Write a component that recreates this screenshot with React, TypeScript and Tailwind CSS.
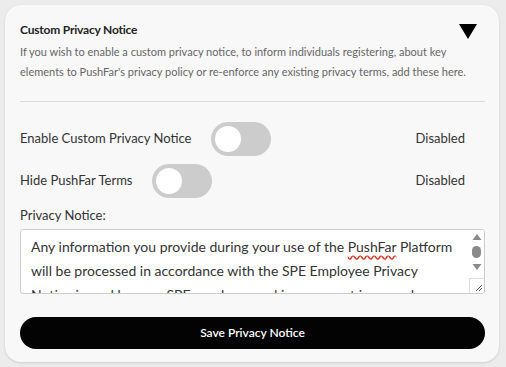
import { useState } from 'react';

function Toggle({ on, onChange }: { on: boolean; onChange: () => void }) {
  return (
    <button
      type="button"
      onClick={onChange}
      className={`w-[60px] h-[34px] rounded-full p-[4px] flex items-center shrink-0 ${on ? 'bg-black justify-end' : 'bg-[#cccccc] justify-start'}`}
    >
      <span className="w-[26px] h-[26px] rounded-full bg-white block" />
    </button>
  );
}

export default function App() {
  const [enabled, setEnabled] = useState(false);
  const [hideTerms, setHideTerms] = useState(false);

  return (
    <div className="min-h-[367px] bg-[#ececec] p-[5px] pr-[7px] font-['Lato',sans-serif]">
      <div className="bg-[#f8f8f8] rounded-[16px] shadow-[0_1px_3px_rgba(0,0,0,0.12)] pl-[15px] pr-[14px] pt-[15px] pb-[13px]">
        <div className="flex items-start justify-between">
          <h2 className="text-[12px] font-bold text-[#222] leading-[20px] tracking-[-0.2px]">Custom Privacy Notice</h2>
          <svg className="w-[18px] h-[15px] mt-[4px] mr-[8px] shrink-0" viewBox="0 0 18 15">
            <path d="M0 0H18L9 15Z" fill="#000" />
          </svg>
        </div>
        <p className="text-[11px] text-[#666] leading-[20px] mt-[2px]">
          If you wish to enable a custom privacy notice, to inform individuals registering, about key elements to PushFar's privacy policy or re-enforce any existing privacy terms, add these here.
        </p>

        <div className="h-px bg-[#dddddd] mt-[19px]" />

        <div className="mt-[20px] flex flex-col gap-[8px]">
          <div className="flex items-center">
            <span className="text-[13px] text-[#333] mr-[20px]">Enable Custom Privacy Notice</span>
            <Toggle on={enabled} onChange={() => setEnabled(!enabled)} />
            <span className="ml-auto mr-[20px] text-[13px] text-[#333]">{enabled ? 'Enabled' : 'Disabled'}</span>
          </div>
          <div className="flex items-center">
            <span className="text-[13px] text-[#333] mr-[20px]">Hide PushFar Terms</span>
            <Toggle on={hideTerms} onChange={() => setHideTerms(!hideTerms)} />
            <span className="ml-auto mr-[20px] text-[13px] text-[#333]">{hideTerms ? 'Enabled' : 'Disabled'}</span>
          </div>
        </div>

        <div className="mt-[7px]">
          <label className="block text-[13px] text-[#333] leading-[20px]">Privacy Notice:</label>
          <div className="relative mt-[4px] h-[65px] border border-[#cccccc] rounded-[3px] bg-white overflow-hidden">
            <div className="pl-[10px] pr-[24px] pt-[5px] text-[14px] leading-[24px] text-[#333]">
              Any information you provide during your use of the{' '}
              <span className="underline decoration-wavy decoration-[#e0301e] underline-offset-[3px]">PushFar</span>{' '}
              Platform will be processed in accordance with the SPE Employee Privacy Notice issued by your SPE employer and in any event in accordance with applicable data protection laws.
            </div>
            <div className="absolute right-0 top-0 bottom-0 w-[15px] bg-white flex flex-col items-center">
              <svg className="w-[10px] h-[8px] mt-[3px]" viewBox="0 0 10 8"><path d="M5 1L9.5 7H0.5Z" fill="#8a8a8a" /></svg>
              <span className="w-[9px] h-[12px] rounded-full bg-[#8a8a8a] mt-[5px]" />
              <svg className="w-[10px] h-[8px] mt-[5px]" viewBox="0 0 10 8"><path d="M0.5 1H9.5L5 7Z" fill="#8a8a8a" /></svg>
              <div className="mt-auto w-[15px] h-[15px] border-t border-l border-[#dddddd] relative">
                <svg className="absolute right-[1px] bottom-[1px] w-[8px] h-[8px]" viewBox="0 0 8 8">
                  <path d="M7 1L1 7M7 4L4 7" stroke="#555" strokeWidth="1" />
                </svg>
              </div>
            </div>
          </div>
        </div>

        <div className="mt-[23px]">
          <button type="button" className="w-full h-[32px] rounded-full bg-[#030303] text-white text-[12px] font-semibold">
            Save Privacy Notice
          </button>
        </div>
      </div>
    </div>
  );
}
